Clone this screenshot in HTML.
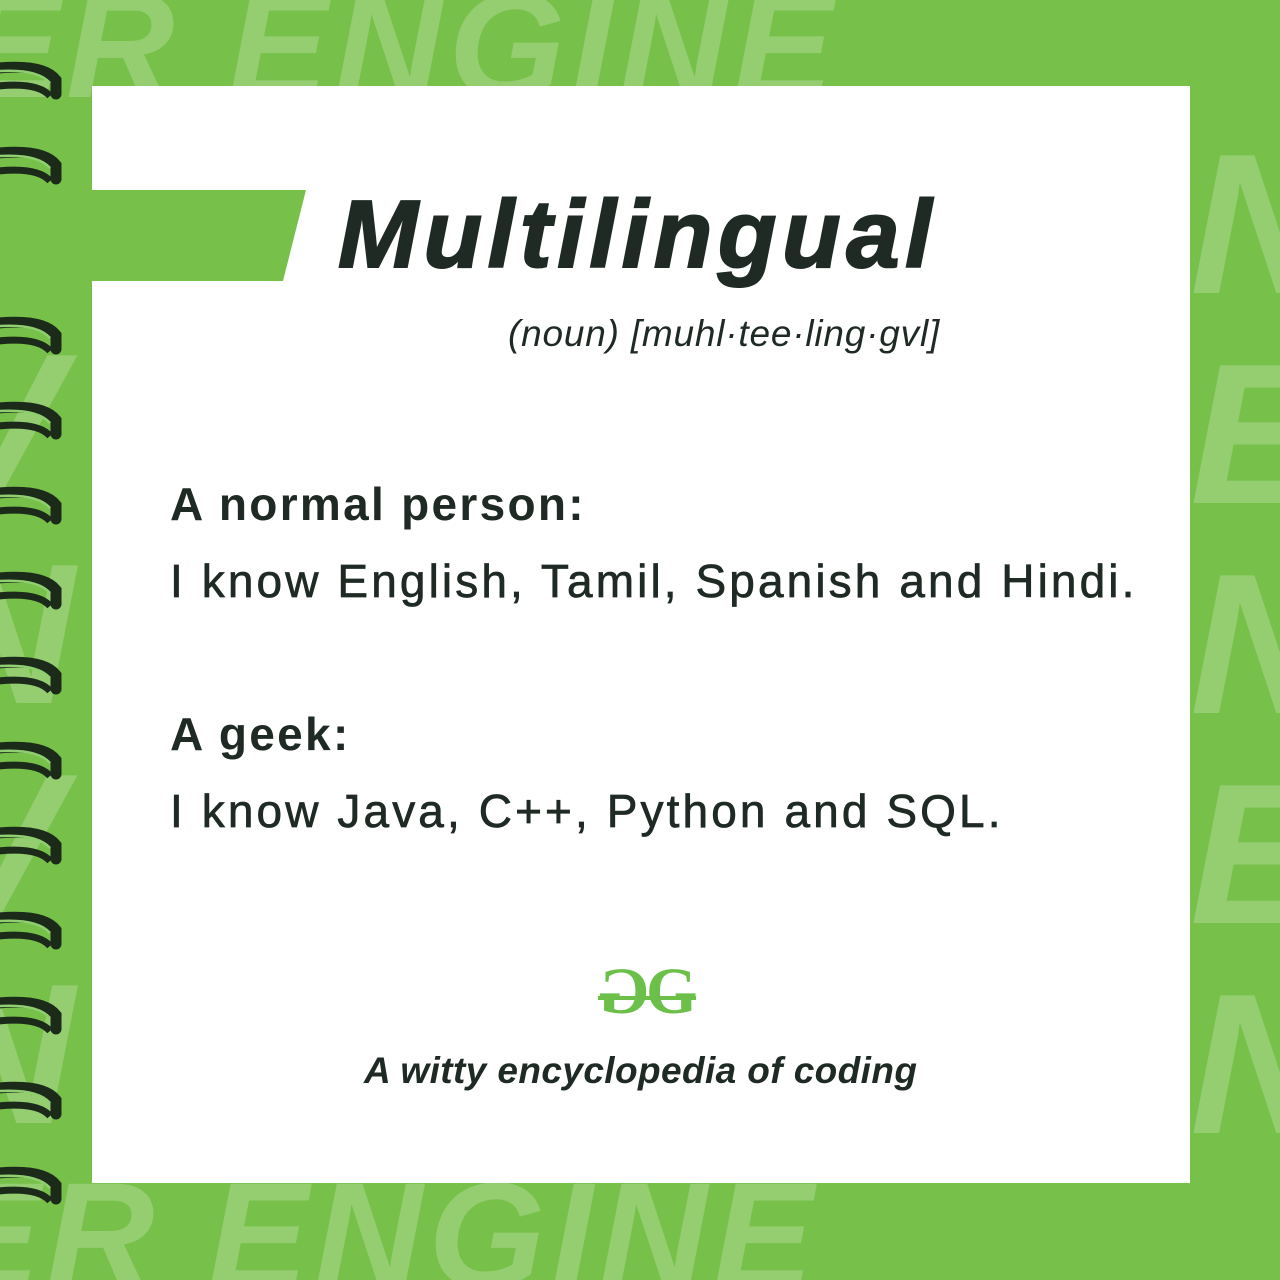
<!DOCTYPE html>
<html><head><meta charset="utf-8"><style>
html,body{margin:0;padding:0;width:1280px;height:1280px;overflow:hidden}
body{position:relative;background:#77c14a;font-family:"Liberation Sans",sans-serif}
.bg{position:absolute;color:rgba(255,255,255,0.22);font-weight:900;font-style:italic;font-family:"Liberation Sans",sans-serif;white-space:nowrap;line-height:1}
.card{position:absolute;left:92px;top:86px;width:1098px;height:1097px;background:#fff}
.band{position:absolute;left:0;top:190px;width:306px;height:91px;background:#77c14a;clip-path:polygon(0 0,306px 0,283px 91px,0 91px)}
.t{position:absolute;color:#1f2a24;white-space:nowrap}
.n{font-size:46px;letter-spacing:3.1px;-webkit-text-stroke:0.7px #1f2a24}
.h{font-size:46px;font-weight:bold;letter-spacing:2.3px}
</style></head><body>
<div class="bg" style="left:-40px;top:-30px;font-size:150px;letter-spacing:6px">ER ENGINE</div>
<div class="bg" style="left:-60px;top:1160px;font-size:150px;letter-spacing:6px">ER ENGINE</div>
<div class="bg" style="left:1190px;top:120px;font-size:200px;line-height:210px">N<br>E<br>N<br>E<br>N</div>
<div class="bg" style="left:-70px;top:320px;font-size:200px;line-height:210px">V<br>N<br>V<br>N</div>
<div class="card"></div>
<div class="band"></div>
<svg width="70" height="1280" style="position:absolute;left:0;top:0">
<defs><g id="r"><path d="M-2 6 Q44 2 56 18 L56 32" stroke="#1c2a1a" stroke-width="11" fill="none" stroke-linecap="round"/><path d="M-2 24 Q38 20 50 34" stroke="#1c2a1a" stroke-width="7" fill="none"/><path d="M0 9 Q38 7 50 21" stroke="#8fcf70" stroke-width="2.5" fill="none"/></g></defs>
<use href="#r" y="62"/><use href="#r" y="147"/><use href="#r" y="317"/><use href="#r" y="402"/><use href="#r" y="487"/><use href="#r" y="572"/><use href="#r" y="657"/><use href="#r" y="742"/><use href="#r" y="827"/><use href="#r" y="912"/><use href="#r" y="997"/><use href="#r" y="1082"/><use href="#r" y="1167"/>
</svg>
<div class="t" style="left:338px;top:180px;font-size:96px;font-weight:900;font-style:italic;letter-spacing:5.5px;-webkit-text-stroke:2px #1f2a24">Multilingual</div>
<div class="t" style="left:508px;top:313px;font-size:37px;font-style:italic;letter-spacing:0.8px">(noun) [muhl·tee·ling·gvl]</div>
<div class="t h" style="left:170px;top:477px">A normal person:</div>
<div class="t n" style="left:170px;top:554px">I know English, Tamil, Spanish and Hindi.</div>
<div class="t h" style="left:170px;top:707px">A geek:</div>
<div class="t n" style="left:170px;top:784px">I know Java, C++, Python and SQL.</div>
<div style="position:absolute;left:598px;top:960px;width:100px;height:64px;color:#6cc04a;font-family:'Liberation Serif',serif;font-size:66px;line-height:64px;font-weight:bold">
<span style="position:absolute;left:0;top:0;transform:scaleX(-1);display:inline-block">G</span><span style="position:absolute;left:48px;top:0">G</span>
<div style="position:absolute;left:0;top:36px;width:98px;height:4px;background:#6cc04a"></div></div>
<div class="t" style="left:364px;top:1050px;font-size:37px;font-weight:bold;font-style:italic;letter-spacing:0.4px">A witty encyclopedia of coding</div>
</body></html>
